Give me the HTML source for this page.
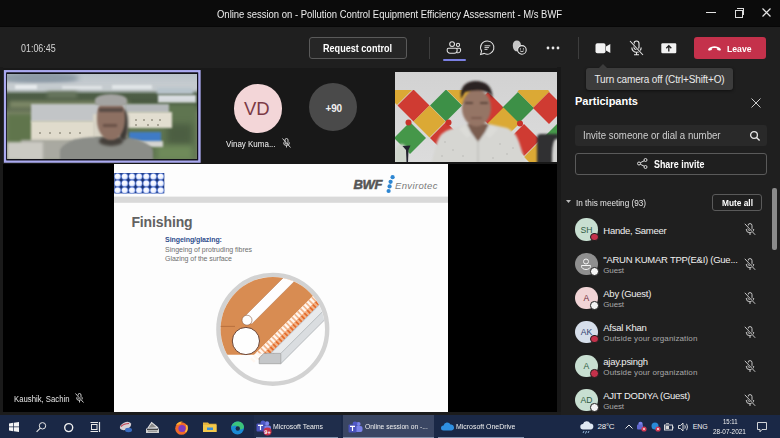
<!DOCTYPE html>
<html><head><meta charset="utf-8">
<style>
*{box-sizing:border-box;margin:0;padding:0}
html,body{width:780px;height:438px;overflow:hidden;background:#181818;font-family:"Liberation Sans",sans-serif;color:#fff}
.a{position:absolute}
.t{position:absolute;white-space:nowrap;line-height:1}
svg{position:absolute;overflow:visible}
</style></head><body>

<!-- title bar -->
<div class="a" style="left:0;top:0;width:780px;height:27px;background:#0b0b0b"></div>
<div class="t" style="left:217px;top:9px;font-size:10.5px;transform:scaleX(0.902);transform-origin:0 0;color:#ececec">Online session on - Pollution Control Equipment Efficiency Assessment - M/s BWF</div>
<div class="a" style="left:706px;top:12px;width:10px;height:1.2px;background:#e4e4e4"></div>
<div class="a" style="left:735px;top:10px;width:8px;height:8px;border:1px solid #ddd"></div>
<div class="a" style="left:737px;top:8px;width:7px;height:7px;border-top:1px solid #ddd;border-right:1px solid #ddd"></div>
<svg style="left:762px;top:8px" width="9" height="9"><path d="M0.5 0.5L8.5 8.5M8.5 0.5L0.5 8.5" stroke="#e4e4e4" stroke-width="1.2"/></svg>

<!-- toolbar -->
<div class="a" style="left:0;top:27px;width:780px;height:41px;background:#1f1f1f"></div>
<div class="a" style="left:0;top:26px;width:780px;height:1px;background:#070707"></div>
<div class="t" style="left:21px;top:44px;font-size:10px;transform:scaleX(0.891);transform-origin:0 0;color:#d6d6d6">01:06:45</div>
<div class="a" style="left:309px;top:37px;width:98px;height:22px;border:1px solid #5a5a5a;border-radius:3px;background:#262626"></div>
<div class="t" style="left:323px;top:44px;font-size:10px;font-weight:bold;transform:scaleX(0.907);transform-origin:0 0;color:#fff">Request control</div>
<div class="a" style="left:429px;top:37px;width:1px;height:22px;background:#3d3d3d"></div>
<!-- people icon -->
<svg style="left:446px;top:40px" width="17" height="15" viewBox="0 0 17 15">
<circle cx="6.1" cy="4.1" r="2.4" fill="none" stroke="#e4e4e4" stroke-width="1.05"/>
<circle cx="12" cy="4.9" r="1.6" fill="none" stroke="#e4e4e4" stroke-width="1.05"/>
<path d="M10.8 8.3h2.6a1.2 1.2 0 0 1 1.2 1.2v0.8a2.4 2.4 0 0 1-2.4 2.4h-1.2" fill="none" stroke="#e4e4e4" stroke-width="1.05"/>
<path d="M2.4 8.3h7.5a1.2 1.2 0 0 1 1.2 1.2v1a2.8 2.8 0 0 1-2.8 2.8h-4.3a2.8 2.8 0 0 1-2.8-2.8v-1a1.2 1.2 0 0 1 1.2-1.2z" fill="none" stroke="#e4e4e4" stroke-width="1.05"/>
</svg>
<div class="a" style="left:443px;top:59px;width:22.5px;height:2px;background:#7b80e2;border-radius:1px"></div>
<!-- chat icon -->
<svg style="left:479px;top:40px" width="16" height="16" viewBox="0 0 16 16">
<path d="M8.3 1a6.6 6.6 0 1 1-3.1 12.4l-3.6 1 1-3.3a6.6 6.6 0 0 1 5.7-10.1z" fill="none" stroke="#e4e4e4" stroke-width="1.05"/>
<path d="M5.5 5.8h5.8M5.5 7.6h4.5M5.5 9.4h3" stroke="#e4e4e4" stroke-width="0.9"/>
</svg>
<!-- reactions icon -->
<svg style="left:512px;top:40px" width="17" height="16" viewBox="0 0 17 16">
<path d="M0.8 5.2C0.8 2.5 2.6 0.6 4.9 0.6C7.2 0.6 8.9 2.4 8.9 4.8L8.9 6.3A5 5 0 0 0 5.6 11.2L3.6 11.2C1.8 10.2 0.8 8.2 0.8 5.2Z" fill="#c6c6c6"/>
<circle cx="9.9" cy="9.9" r="4.3" fill="#1f1f1f" stroke="#e4e4e4" stroke-width="1.1"/>
<circle cx="8.4" cy="8.9" r="0.6" fill="#e4e4e4"/><circle cx="11.4" cy="8.9" r="0.6" fill="#e4e4e4"/>
<path d="M8.1 10.9q1.8 1.6 3.6 0" fill="none" stroke="#e4e4e4" stroke-width="0.9"/>
</svg>
<!-- more -->
<svg style="left:546px;top:46px" width="14" height="4" viewBox="0 0 14 4">
<circle cx="2" cy="2" r="1.4" fill="#e8e8e8"/><circle cx="7" cy="2" r="1.4" fill="#e8e8e8"/><circle cx="12" cy="2" r="1.4" fill="#e8e8e8"/>
</svg>
<div class="a" style="left:578px;top:37px;width:1px;height:22px;background:#3d3d3d"></div>
<!-- camera -->
<svg style="left:595px;top:43px" width="16" height="11" viewBox="0 0 16 11">
<rect x="0.5" y="0.3" width="10" height="10" rx="1.8" fill="#f2f2f2"/>
<path d="M11 3.5L15.3 1v9L11 7.5z" fill="#f2f2f2"/>
</svg>
<!-- mic off -->
<svg style="left:629px;top:40px" width="15" height="16" viewBox="0 0 15 16">
<rect x="5" y="1" width="5" height="8.5" rx="2.5" fill="none" stroke="#e8e8e8" stroke-width="1.1"/>
<path d="M2.8 7.5a4.7 4.7 0 0 0 9.4 0M7.5 12.3v2.5M5 14.8h5" fill="none" stroke="#e8e8e8" stroke-width="1.1"/>
<path d="M1 1L14 15" stroke="#1f1f1f" stroke-width="2.2"/>
<path d="M1 1L14 15" stroke="#e8e8e8" stroke-width="1.1"/>
</svg>
<!-- share -->
<svg style="left:661px;top:43px" width="16" height="11" viewBox="0 0 16 11">
<rect x="0.3" y="0.3" width="15" height="10" rx="1.2" fill="#f2f2f2"/>
<path d="M7.8 8.5V2.8M5.3 5.2L7.8 2.6l2.5 2.6" fill="none" stroke="#1f1f1f" stroke-width="1.3"/>
</svg>
<!-- leave -->
<div class="a" style="left:694px;top:37px;width:72px;height:22px;border-radius:3px;background:#c4314b"></div>
<svg style="left:707px;top:45px" width="15" height="6" viewBox="0 0 15 6">
<path d="M1 4.2c3.5-3.8 9.5-3.8 13 0l-0.8 1.6-3-0.8v-1.6c-1.8-0.6-3.6-0.6-5.4 0v1.6l-3 0.8z" fill="#fff"/>
</svg>
<div class="t" style="left:727px;top:44px;font-size:9.5px;font-weight:bold;transform:scaleX(0.91);transform-origin:0 0;color:#fff">Leave</div>

<!-- stage -->
<div class="a" style="left:0;top:67px;width:3px;height:348px;background:#1a1a1a"></div>
<div class="a" style="left:3px;top:164px;width:554px;height:248px;background:#000"></div>
<div class="a" style="left:557px;top:67px;width:4px;height:348px;background:#181818"></div>
<div class="a" style="left:0;top:412px;width:561px;height:3px;background:#1c1c1c"></div>

<!-- tile 1 -->
<svg style="left:0;top:60px" width="210" height="110"><rect x="5.1" y="11.3" width="194.3" height="90.2" fill="none" stroke="#abaaf0" stroke-width="2.5"/><rect x="6.8" y="13" width="190.8" height="86.8" fill="none" stroke="#10101a" stroke-width="1"/></svg>
<div class="a" id="t1" style="left:7.3px;top:73.8px;width:189.7px;height:85.3px;overflow:hidden;background:#9aa6ad">
<div class="a" style="left:0;top:0;width:190px;height:86px;background:linear-gradient(#b9c2c9,#c3c9ce 10%,#bfc6cb 16%,#4e5e47 24%,#46563f 36%,#7a8466 46%)"></div>
<div class="a" style="left:-6px;top:-3px;width:78px;height:14px;border-radius:50%;background:#8d9aa5;filter:blur(2.5px)"></div>
<div class="a" style="left:0;top:9px;width:190px;height:8px;background:#c5cbcf;filter:blur(1.5px)"></div>
<div class="a" style="left:8px;top:11px;width:22px;height:4px;background:#e8ecee;filter:blur(1px)"></div>
<div class="a" style="left:55px;top:12px;width:40px;height:3px;background:#e0e4e6;filter:blur(1px)"></div>
<div class="a" style="left:105px;top:11px;width:40px;height:4px;background:#e2e6e8;filter:blur(1px)"></div>
<div class="a" style="left:150px;top:14px;width:36px;height:6px;background:#b8c4cc;filter:blur(1.5px)"></div>
<div class="a" style="left:2px;top:27px;width:120px;height:7px;background:#7f8a68;filter:blur(2px)"></div>
<div class="a" style="left:40px;top:18px;width:30px;height:6px;background:#6a7860;filter:blur(2px)"></div>
<div class="a" style="left:151px;top:21px;width:38px;height:8px;background:#d8dce0;filter:blur(1px)"></div>
<div class="a" style="left:0;top:40px;width:26px;height:32px;background:#60754c;filter:blur(2px)"></div>
<div class="a" style="left:120px;top:30px;width:70px;height:56px;background:#5f7550;filter:blur(2px)"></div>
<div class="a" style="left:160px;top:50px;width:25px;height:20px;background:#4c5e42;filter:blur(3px)"></div>
<div class="a" style="left:150px;top:72px;width:35px;height:14px;background:#6f8a5a;filter:blur(2.5px)"></div>
<div class="a" style="left:24px;top:30px;width:95px;height:18px;background:#c2c5c7;filter:blur(0.8px)"></div>
<div class="a" style="left:24px;top:47px;width:64px;height:21px;background:#e0dbcc;filter:blur(0.8px)"></div>
<div class="a" style="left:86px;top:40px;width:34px;height:24px;background:#d8d4c6;filter:blur(0.8px)"></div>
<div class="a" style="left:118px;top:30px;width:44px;height:9px;background:#b4b8ba;filter:blur(0.8px)"></div>
<div class="a" style="left:118px;top:38px;width:47px;height:16px;background:#e2ded0;filter:blur(0.8px)"></div>
<div class="a" style="left:32px;top:58px;width:2px;height:2px;background:#a9a596;filter:blur(0.6px)"></div><div class="a" style="left:42px;top:58px;width:2px;height:2px;background:#a9a596;filter:blur(0.6px)"></div><div class="a" style="left:52px;top:58px;width:2px;height:2px;background:#a9a596;filter:blur(0.6px)"></div><div class="a" style="left:62px;top:58px;width:2px;height:2px;background:#a9a596;filter:blur(0.6px)"></div><div class="a" style="left:72px;top:58px;width:2px;height:2px;background:#a9a596;filter:blur(0.6px)"></div><div class="a" style="left:128px;top:45px;width:2px;height:2px;background:#a9a596;filter:blur(0.6px)"></div><div class="a" style="left:136px;top:45px;width:2px;height:2px;background:#a9a596;filter:blur(0.6px)"></div><div class="a" style="left:144px;top:45px;width:2px;height:2px;background:#a9a596;filter:blur(0.6px)"></div><div class="a" style="left:152px;top:45px;width:2px;height:2px;background:#a9a596;filter:blur(0.6px)"></div><div class="a" style="left:128px;top:50px;width:2px;height:2px;background:#a9a596;filter:blur(0.6px)"></div><div class="a" style="left:140px;top:50px;width:2px;height:2px;background:#a9a596;filter:blur(0.6px)"></div><div class="a" style="left:150px;top:50px;width:2px;height:2px;background:#a9a596;filter:blur(0.6px)"></div>
<div class="a" style="left:122px;top:58px;width:32px;height:11px;background:#3f7bc6;filter:blur(1px)"></div>
<div class="a" style="left:126px;top:67px;width:30px;height:6px;background:#d4d4d0;filter:blur(1px)"></div>
<div class="a" style="left:14px;top:66px;width:80px;height:20px;background:#a9a9a1;filter:blur(1.5px)"></div>
<div class="a" style="left:0;top:68px;width:36px;height:18px;background:#cbcac3;filter:blur(1.5px)"></div>
<div class="a" style="left:53px;top:63px;width:93px;height:36px;border-radius:40% 40% 0 0;background:#8b8d88;filter:blur(1.2px)"></div>
<div class="a" style="left:92px;top:62px;width:24px;height:10px;border-radius:50%;background:#45403b;filter:blur(1.5px)"></div>
<div class="a" style="left:111px;top:36px;width:10px;height:30px;border-radius:40%;background:#3e3a36;filter:blur(1.5px)"></div>
<div class="a" style="left:90px;top:24px;width:28px;height:42px;border-radius:45% 45% 48% 48%;background:#8d7062;filter:blur(1.2px)"></div>
<div class="a" style="left:88px;top:20px;width:32px;height:12px;border-radius:50% 50% 25% 25%;background:#a4a4a2;filter:blur(1.2px)"></div>
<div class="a" style="left:92px;top:34px;width:24px;height:4px;background:#5a4c46;filter:blur(1.2px)"></div>
<div class="a" style="left:96px;top:50px;width:14px;height:3px;background:#6a5248;filter:blur(1px)"></div>
</div>

<!-- avatars -->
<div class="a" style="left:233.5px;top:84.3px;width:48.5px;height:48.5px;border-radius:50%;background:#f3d6d8"></div>
<div class="t" style="left:244px;top:100px;font-size:18.5px;letter-spacing:0px;color:#7b3a46">VD</div>
<div class="t" style="left:226px;top:139px;font-size:9.5px;transform:scaleX(0.84);transform-origin:0 0;color:#f6f6f6">Vinay Kuma...</div>
<svg style="left:282px;top:138px" width="9" height="10" viewBox="0 0 9 10">
<rect x="3" y="0.5" width="3" height="5.5" rx="1.5" fill="none" stroke="#ddd" stroke-width="0.9"/>
<path d="M1.5 4.5a3 3 0 0 0 6 0M4.5 7.5v2" fill="none" stroke="#ddd" stroke-width="0.9"/>
<path d="M0.5 0.5L8.5 9.5" stroke="#ddd" stroke-width="0.9"/>
</svg>
<div class="a" style="left:308.8px;top:83.2px;width:48px;height:48px;border-radius:50%;background:#4a4a4a"></div>
<div class="t" style="left:325.5px;top:103.5px;font-size:10px;font-weight:bold;letter-spacing:-0.2px;color:#f0f0f0">+90</div>

<!-- tile 3 -->
<div class="a" id="t3" style="left:395px;top:72px;width:162px;height:90px;overflow:hidden;background:#dcdcdc">
<div class="a" style="left:0;top:0;width:162px;height:90px;background:linear-gradient(#d2d2d2,#dcdcdc)"></div>
<svg style="left:0;top:0" width="162" height="90" viewBox="0 0 162 90">
<defs><clipPath id="wc"><rect x="0" y="18" width="162" height="72"/></clipPath><filter id="bl"><feGaussianBlur stdDeviation="0.6"/></filter></defs>
<g clip-path="url(#wc)" filter="url(#bl)">
<path d="M2 1 L18 17 L2 33 L-14 17 Z" fill="#dba934"/>
<path d="M18.5 17.5 L34.5 33.5 L18.5 49.5 L2.5 33.5 Z" fill="#cf3a32"/>
<path d="M51 17.5 L67 33.5 L51 49.5 L35 33.5 Z" fill="#3c9046"/>
<path d="M67 1 L83 17 L67 33 L51 17 Z" fill="#dba934"/>
<path d="M34.5 33.5 L50.5 49.5 L34.5 65.5 L18.5 49.5 Z" fill="#dba934"/>
<path d="M15 50 L31 66 L15 82 L-1 66 Z" fill="#44974a"/>
<path d="M51 50 L67 66 L51 82 L35 66 Z" fill="#cf3a32"/>
<path d="M93 20 L109 36 L93 52 L77 36 Z" fill="#cf3a32"/>
<path d="M123 20 L139 36 L123 52 L107 36 Z" fill="#3c9046"/>
<path d="M138.5 3.5 L154.5 19.5 L138.5 35.5 L122.5 19.5 Z" fill="#dba934"/>
<path d="M154 20 L170 36 L154 52 L138 36 Z" fill="#cf3a32"/>
<path d="M108.5 35.5 L124.5 51.5 L108.5 67.5 L92.5 51.5 Z" fill="#dba934"/>
<path d="M129 52 L145 68 L129 84 L113 68 Z" fill="#cf3a32"/>
<path d="M162 52 L178 68 L162 84 L146 68 Z" fill="#44974a"/>
<path d="M145 69 L161 85 L145 101 L129 85 Z" fill="#dba934"/>
<path d="M-18 50 L-2 66 L-18 82 L-34 66 Z" fill="#cf3a32"/>
<circle cx="13.5" cy="50.5" r="3" fill="#c8302c"/>
<circle cx="53.5" cy="50.5" r="3" fill="#c8302c"/>
<circle cx="125" cy="51.5" r="3" fill="#c8302c"/>
</g>
</svg>
<div class="a" style="left:0;top:72px;width:13px;height:20px;border-radius:60% 60% 0 0;background:#cfd6cc;filter:blur(0.8px)"></div>
<svg style="left:0;top:0" width="162" height="90" viewBox="0 0 162 90"><path d="M7.5 74 L15.5 73.5 L13.5 78 L13 90 L11.5 90 L11 78 Z" fill="#22222e" filter="url(#bl)"/></svg>
<div class="a" style="left:142px;top:62px;width:21px;height:30px;border-radius:4px 0 0 0;background:#303032;filter:blur(0.8px)"></div>
<div class="a" style="left:157px;top:67px;width:7px;height:25px;border-radius:60% 0 0 0;background:#d4d4d2;filter:blur(0.8px)"></div>
<svg style="left:0;top:0" width="162" height="90" viewBox="0 0 162 90"><defs><filter id="bl2"><feGaussianBlur stdDeviation="0.9"/></filter></defs>
<g filter="url(#bl2)">
<path d="M36 92 L42 70 Q45 60 56 57 L72 52 L94 52 L112 56 Q121 60 124 70 L131 92 Z" fill="#d6d6d2"/>
<path d="M72 52 L94 52 L90 60 L83 70 L76 60 Z" fill="#7a5d50"/>
<path d="M70 53 L76 63 L72 66 L64 57 Z M96 53 L90 63 L95 66 L103 57 Z" fill="#dcdcd8"/>
<path d="M83 68 V92" stroke="#b0b0ac" stroke-width="0.8"/>
<ellipse cx="81.5" cy="36" rx="14.5" ry="18.5" fill="#957565"/>
<path d="M66 27 Q64 10 80 9 Q98 9 97.5 27 L95 22 Q88 16 70 20 Z" fill="#2b2321"/>
<path d="M70 31 h8 M85 31 h8" stroke="#3e2c26" stroke-width="1.6"/>
<path d="M76 46 h11" stroke="#6a4c40" stroke-width="1.2"/>
</g>
<g fill="#9a9a96" opacity="0.6"><circle cx="50" cy="70" r="0.7"/><circle cx="58" cy="78" r="0.7"/><circle cx="105" cy="72" r="0.7"/><circle cx="112" cy="82" r="0.7"/><circle cx="68" cy="84" r="0.7"/><circle cx="98" cy="86" r="0.7"/><circle cx="47" cy="84" r="0.7"/><circle cx="118" cy="76" r="0.7"/></g>
</svg>
</div>

<!-- slide -->
<div class="a" id="slide" style="left:113.5px;top:164px;width:334px;height:248px;background:#fdfdfd;overflow:hidden">
<svg style="left:0;top:0" width="334" height="248" viewBox="0 0 334 248">
<defs>
<linearGradient id="dg" x1="0" y1="0" x2="0" y2="1"><stop offset="0" stop-color="#22418e"/><stop offset="0.5" stop-color="#142a66"/><stop offset="1" stop-color="#22418e"/></linearGradient>
<radialGradient id="dot" cx="0.45" cy="0.4" r="0.65"><stop offset="0" stop-color="#ffffff"/><stop offset="0.6" stop-color="#eef2ff"/><stop offset="1" stop-color="#b8c8f0"/></radialGradient>
<clipPath id="cc"><circle cx="158.8" cy="165.3" r="52.2"/></clipPath>
</defs>
<rect x="0.3" y="9" width="50" height="20.4" fill="url(#dg)"/>
<g fill="#6a8ae0" opacity="0.9"><circle cx="3.6" cy="12.5" r="3.55"/><circle cx="10.7" cy="12.5" r="3.55"/><circle cx="18" cy="12.5" r="3.55"/><circle cx="25.1" cy="12.5" r="3.55"/><circle cx="32.3" cy="12.5" r="3.55"/><circle cx="39.4" cy="12.5" r="3.55"/><circle cx="46.7" cy="12.5" r="3.55"/><circle cx="3.6" cy="19.4" r="3.55"/><circle cx="10.7" cy="19.4" r="3.55"/><circle cx="18" cy="19.4" r="3.55"/><circle cx="25.1" cy="19.4" r="3.55"/><circle cx="32.3" cy="19.4" r="3.55"/><circle cx="39.4" cy="19.4" r="3.55"/><circle cx="46.7" cy="19.4" r="3.55"/><circle cx="3.6" cy="26.3" r="3.55"/><circle cx="10.7" cy="26.3" r="3.55"/><circle cx="18" cy="26.3" r="3.55"/><circle cx="25.1" cy="26.3" r="3.55"/><circle cx="32.3" cy="26.3" r="3.55"/><circle cx="39.4" cy="26.3" r="3.55"/><circle cx="46.7" cy="26.3" r="3.55"/></g><g fill="url(#dot)"><circle cx="3.6" cy="12.5" r="2.85"/><circle cx="10.7" cy="12.5" r="2.85"/><circle cx="18" cy="12.5" r="2.85"/><circle cx="25.1" cy="12.5" r="2.85"/><circle cx="32.3" cy="12.5" r="2.85"/><circle cx="39.4" cy="12.5" r="2.85"/><circle cx="46.7" cy="12.5" r="2.85"/><circle cx="3.6" cy="19.4" r="2.85"/><circle cx="10.7" cy="19.4" r="2.85"/><circle cx="18" cy="19.4" r="2.85"/><circle cx="25.1" cy="19.4" r="2.85"/><circle cx="32.3" cy="19.4" r="2.85"/><circle cx="39.4" cy="19.4" r="2.85"/><circle cx="46.7" cy="19.4" r="2.85"/><circle cx="3.6" cy="26.3" r="2.85"/><circle cx="10.7" cy="26.3" r="2.85"/><circle cx="18" cy="26.3" r="2.85"/><circle cx="25.1" cy="26.3" r="2.85"/><circle cx="32.3" cy="26.3" r="2.85"/><circle cx="39.4" cy="26.3" r="2.85"/><circle cx="46.7" cy="26.3" r="2.85"/></g>
<rect x="0" y="32.6" width="334" height="6.2" fill="#d9d9d9"/>
<g fill="#2d86d2">
<circle cx="278.6" cy="13.2" r="2.1"/><circle cx="276.6" cy="17.8" r="2.1"/><circle cx="275.6" cy="22.4" r="2.1"/><circle cx="274.6" cy="27" r="2.1"/>
</g>
<!-- graphic -->
<circle cx="158.8" cy="165.3" r="54.4" fill="none" stroke="#d2d2d2" stroke-width="4.4"/>
<g clip-path="url(#cc)">
<path d="M95 190.7 L140.1 190.7 L240 90.8 L240 60 L95 60 Z" fill="#d88c52"/>
<path d="M128.5 154.5 L240 43 L240 57.8 L137.8 160 Z" fill="#fefefe" stroke="#b07550" stroke-width="0.5"/>
<path d="M100 162.4 L121 162.4" stroke="#b06838" stroke-width="0.8"/>
<path d="M141.4 189.4 L156.8 189.4 L240 106.2 L240 90.8 Z" fill="#f2b48a"/>
<path d="M138 196.8 L240 94.8" stroke="#fff7f0" stroke-width="5.4" stroke-dasharray="2.3 1.7"/>
<path d="M146 196.5 L240 102.5" stroke="#e46c2c" stroke-width="4.4" stroke-dasharray="1.8 2.2"/>
<path d="M153 196.2 L240 109.2" stroke="#ec9a6a" stroke-width="1"/>
<path d="M156.8 189.4 L166.8 189.4 L240 116.2 L240 106.2 Z" fill="#e8eaec"/>
<path d="M166.8 189.4 L166.8 199.7 L240 126.5 L240 116.2 Z" fill="#dadde0"/>
<path d="M156.8 189.4 L240 106.2" stroke="#a9b2be" stroke-width="0.7"/>
<path d="M166.8 189.4 L240 116.2 M166.8 199.7 L240 126.5" stroke="#a4a8ac" stroke-width="0.7"/>
<path d="M145.2 194 L149.8 189.4 L166.8 189.4 L166.8 199.7 L145.2 199.7 Z" fill="#c5c7c9" stroke="#9c9c9c" stroke-width="0.7"/>
</g>
<circle cx="133" cy="156.2" r="5" fill="#fefefe" stroke="#8a5a40" stroke-width="0.6"/>
<circle cx="131.9" cy="177" r="13.6" fill="#fefefe" stroke="#6b4434" stroke-width="1"/>
</svg>
<div class="t" style="left:240px;top:14.2px;font-size:13px;font-weight:bold;font-style:italic;letter-spacing:-0.3px;color:#555;-webkit-text-stroke:0.5px #555">BWF</div>
<div class="t" style="left:281.5px;top:17.3px;font-size:9.5px;font-style:italic;letter-spacing:0.35px;color:#7a7a7a">Envirotec</div>
<div class="t" style="left:17.9px;top:51.3px;font-size:14px;font-weight:bold;letter-spacing:-0.12px;color:#626262">Finishing</div>
<div class="t" style="left:51.6px;top:71.9px;font-size:7px;font-weight:bold;letter-spacing:-0.07px;color:#2f4e8d">Singeing/glazing:</div>
<div class="t" style="left:51.6px;top:81.5px;font-size:7px;letter-spacing:-0.02px;color:#6e6e6e">Singeing of protruding fibres</div>
<div class="t" style="left:51.6px;top:91.3px;font-size:7px;letter-spacing:-0.06px;color:#6e6e6e">Glazing of the surface</div>
</div>
<div class="t" style="left:14px;top:395px;font-size:8.5px;transform:scaleX(0.91);transform-origin:0 0;color:#e6e6e6">Kaushik, Sachin</div>
<svg style="left:75px;top:393px" width="9" height="10" viewBox="0 0 9 10">
<rect x="3" y="0.5" width="3" height="5.5" rx="1.5" fill="none" stroke="#ddd" stroke-width="0.9"/>
<path d="M1.5 4.5a3 3 0 0 0 6 0M4.5 7.5v2" fill="none" stroke="#ddd" stroke-width="0.9"/>
<path d="M0.5 0.5L8.5 9.5" stroke="#000" stroke-width="1.8"/><path d="M0.5 0.5L8.5 9.5" stroke="#ddd" stroke-width="0.9"/>
</svg>

<!-- participants panel -->
<div class="a" style="left:561px;top:67px;width:219px;height:348px;background:#1f1f1f"></div>
<div class="t" style="left:575px;top:96px;font-size:11px;font-weight:bold;letter-spacing:0px;color:#fff">Participants</div>
<svg style="left:750.5px;top:98px" width="10" height="10" viewBox="0 0 10 10"><path d="M0.5 0.5L9.5 9.5M9.5 0.5L0.5 9.5" stroke="#ccc" stroke-width="1"/></svg>
<div class="a" style="left:575px;top:124.5px;width:192px;height:21px;background:#292929;border-radius:3px"></div>
<div class="t" style="left:583px;top:130px;font-size:10.5px;transform:scaleX(0.917);transform-origin:0 0;color:#cfcfcf">Invite someone or dial a number</div>
<svg style="left:749px;top:129.5px" width="12" height="12" viewBox="0 0 12 12"><circle cx="5" cy="5" r="3.4" fill="none" stroke="#e6e6e6" stroke-width="1.3"/><path d="M7.5 7.5L10.6 10.6" stroke="#e6e6e6" stroke-width="1.4"/></svg>
<div class="a" style="left:575px;top:153px;width:192px;height:21.5px;border:1px solid #5a5a5a;border-radius:3px;background:#1f1f1f"></div>
<svg style="left:637px;top:158px" width="11" height="11" viewBox="0 0 11 11"><circle cx="8.5" cy="2" r="1.5" fill="none" stroke="#ddd" stroke-width="1"/><circle cx="2" cy="5.5" r="1.5" fill="none" stroke="#ddd" stroke-width="1"/><circle cx="8.5" cy="9" r="1.5" fill="none" stroke="#ddd" stroke-width="1"/><path d="M3.3 4.7L7.2 2.8M3.3 6.3L7.2 8.2" stroke="#ddd" stroke-width="1"/></svg>
<div class="t" style="left:654px;top:159.5px;font-size:10px;font-weight:bold;transform:scaleX(0.89);transform-origin:0 0;color:#fff">Share invite</div>
<svg style="left:566px;top:200px" width="5" height="4" viewBox="0 0 5 4"><path d="M0 0h5L2.5 3z" fill="#bbb"/></svg>
<div class="t" style="left:575.5px;top:198px;font-size:9.5px;transform:scaleX(0.861);transform-origin:0 0;color:#e6e6e6">In this meeting (93)</div>
<div class="a" style="left:712px;top:194px;width:50px;height:16.5px;border:1px solid #5a5a5a;border-radius:3px;background:#1f1f1f"></div>
<div class="t" style="left:721.5px;top:198px;font-size:9.5px;font-weight:bold;transform:scaleX(0.876);transform-origin:0 0;color:#fff">Mute all</div>
<div class="a" style="left:772px;top:188px;width:4.5px;height:62px;border-radius:2px;background:#8a8a8a"></div>
<div id="plist"></div>
<div class="a" style="left:575.2px;top:218.4px;width:22.4px;height:22.4px;border-radius:50%;background:#c8dfd1"></div>
<div class="t" style="left:575.2px;width:22.4px;text-align:center;top:225.7px;font-size:8.6px;letter-spacing:-0.1px;color:#2f5c43">SH</div>
<div class="a" style="left:590.1px;top:232.6px;width:8.6px;height:8.6px;border-radius:50%;background:#c4314b;border:1.3px solid #1f1f1f"></div>
<div class="t" style="left:603.3px;top:226.0px;font-size:9.5px;letter-spacing:-0.26px;color:#f0f0f0">Hande, Sameer</div>
<svg style="left:743.5px;top:223.4px" width="12" height="12.5" viewBox="0 0 12 12.5"><rect x="4" y="0.6" width="4" height="7" rx="2" fill="none" stroke="#d0d0d0" stroke-width="0.95"/><path d="M2.2 6a3.8 3.8 0 0 0 7.6 0M6 9.8v2.2" fill="none" stroke="#d0d0d0" stroke-width="0.95"/><path d="M0.8 0.8L11.2 11.8" stroke="#1f1f1f" stroke-width="2"/><path d="M0.8 0.8L11.2 11.8" stroke="#d0d0d0" stroke-width="0.95"/></svg>
<div class="a" style="left:575.2px;top:253.0px;width:22.4px;height:22.4px;border-radius:50%;background:#8f8f8f"></div>
<svg style="left:580.4px;top:258.2px" width="12" height="12" viewBox="0 0 12 12"><circle cx="6" cy="3.5" r="2.5" fill="none" stroke="#f4f4f4" stroke-width="1"/><path d="M1.5 7.5h9v0.8c0 1.8-2 3.2-4.5 3.2s-4.5-1.4-4.5-3.2z" fill="none" stroke="#f4f4f4" stroke-width="1"/></svg>
<div class="a" style="left:590.1px;top:267.2px;width:8.6px;height:8.6px;border-radius:50%;background:#f4f4f4;border:1.3px solid #1f1f1f"></div>
<div class="t" style="left:603.3px;top:255.2px;font-size:9.5px;letter-spacing:-0.26px;color:#f0f0f0">"ARUN KUMAR TPP(E&amp;I) (Gue...</div>
<div class="t" style="left:603.3px;top:267.0px;font-size:8px;letter-spacing:-0.15px;color:#a8a8a8">Guest</div>
<svg style="left:743.5px;top:258.0px" width="12" height="12.5" viewBox="0 0 12 12.5"><rect x="4" y="0.6" width="4" height="7" rx="2" fill="none" stroke="#d0d0d0" stroke-width="0.95"/><path d="M2.2 6a3.8 3.8 0 0 0 7.6 0M6 9.8v2.2" fill="none" stroke="#d0d0d0" stroke-width="0.95"/><path d="M0.8 0.8L11.2 11.8" stroke="#1f1f1f" stroke-width="2"/><path d="M0.8 0.8L11.2 11.8" stroke="#d0d0d0" stroke-width="0.95"/></svg>
<div class="a" style="left:575.2px;top:286.8px;width:22.4px;height:22.4px;border-radius:50%;background:#f1d4d6"></div>
<div class="t" style="left:575.2px;width:22.4px;text-align:center;top:294.1px;font-size:8.6px;letter-spacing:-0.1px;color:#6e2c3a">A</div>
<div class="a" style="left:590.1px;top:301.0px;width:8.6px;height:8.6px;border-radius:50%;background:#f4f4f4;border:1.3px solid #1f1f1f"></div>
<div class="t" style="left:603.3px;top:289.0px;font-size:9.5px;letter-spacing:-0.26px;color:#f0f0f0">Aby (Guest)</div>
<div class="t" style="left:603.3px;top:300.8px;font-size:8px;letter-spacing:-0.15px;color:#a8a8a8">Guest</div>
<svg style="left:743.5px;top:291.8px" width="12" height="12.5" viewBox="0 0 12 12.5"><rect x="4" y="0.6" width="4" height="7" rx="2" fill="none" stroke="#d0d0d0" stroke-width="0.95"/><path d="M2.2 6a3.8 3.8 0 0 0 7.6 0M6 9.8v2.2" fill="none" stroke="#d0d0d0" stroke-width="0.95"/><path d="M0.8 0.8L11.2 11.8" stroke="#1f1f1f" stroke-width="2"/><path d="M0.8 0.8L11.2 11.8" stroke="#d0d0d0" stroke-width="0.95"/></svg>
<div class="a" style="left:575.2px;top:320.7px;width:22.4px;height:22.4px;border-radius:50%;background:#d6deea"></div>
<div class="t" style="left:575.2px;width:22.4px;text-align:center;top:328.0px;font-size:8.6px;letter-spacing:-0.1px;color:#30406e">AK</div>
<div class="a" style="left:590.1px;top:334.9px;width:8.6px;height:8.6px;border-radius:50%;background:#c4314b;border:1.3px solid #1f1f1f"></div>
<div class="t" style="left:603.3px;top:322.9px;font-size:9.5px;letter-spacing:-0.26px;color:#f0f0f0">Afsal Khan</div>
<div class="t" style="left:603.3px;top:334.7px;font-size:8px;letter-spacing:0.12px;color:#a8a8a8">Outside your organization</div>
<svg style="left:743.5px;top:325.7px" width="12" height="12.5" viewBox="0 0 12 12.5"><rect x="4" y="0.6" width="4" height="7" rx="2" fill="none" stroke="#d0d0d0" stroke-width="0.95"/><path d="M2.2 6a3.8 3.8 0 0 0 7.6 0M6 9.8v2.2" fill="none" stroke="#d0d0d0" stroke-width="0.95"/><path d="M0.8 0.8L11.2 11.8" stroke="#1f1f1f" stroke-width="2"/><path d="M0.8 0.8L11.2 11.8" stroke="#d0d0d0" stroke-width="0.95"/></svg>
<div class="a" style="left:575.2px;top:355.0px;width:22.4px;height:22.4px;border-radius:50%;background:#c8dfd1"></div>
<div class="t" style="left:575.2px;width:22.4px;text-align:center;top:362.3px;font-size:8.6px;letter-spacing:-0.1px;color:#2f5c43">A</div>
<div class="a" style="left:590.1px;top:369.2px;width:8.6px;height:8.6px;border-radius:50%;background:#c4314b;border:1.3px solid #1f1f1f"></div>
<div class="t" style="left:603.3px;top:357.2px;font-size:9.5px;letter-spacing:-0.26px;color:#f0f0f0">ajay.psingh</div>
<div class="t" style="left:603.3px;top:369.0px;font-size:8px;letter-spacing:0.12px;color:#a8a8a8">Outside your organization</div>
<svg style="left:743.5px;top:360.0px" width="12" height="12.5" viewBox="0 0 12 12.5"><rect x="4" y="0.6" width="4" height="7" rx="2" fill="none" stroke="#d0d0d0" stroke-width="0.95"/><path d="M2.2 6a3.8 3.8 0 0 0 7.6 0M6 9.8v2.2" fill="none" stroke="#d0d0d0" stroke-width="0.95"/><path d="M0.8 0.8L11.2 11.8" stroke="#1f1f1f" stroke-width="2"/><path d="M0.8 0.8L11.2 11.8" stroke="#d0d0d0" stroke-width="0.95"/></svg>
<div class="a" style="left:575.2px;top:389.0px;width:22.4px;height:22.4px;border-radius:50%;background:#c8dfd1"></div>
<div class="t" style="left:575.2px;width:22.4px;text-align:center;top:396.3px;font-size:8.6px;letter-spacing:-0.1px;color:#2f5c43">AD</div>
<div class="a" style="left:590.1px;top:403.2px;width:8.6px;height:8.6px;border-radius:50%;background:#f4f4f4;border:1.3px solid #1f1f1f"></div>
<div class="t" style="left:603.3px;top:391.2px;font-size:9.5px;letter-spacing:-0.26px;color:#f0f0f0">AJIT DODIYA (Guest)</div>
<div class="t" style="left:603.3px;top:403.0px;font-size:8px;letter-spacing:-0.15px;color:#a8a8a8">Guest</div>
<svg style="left:743.5px;top:394.0px" width="12" height="12.5" viewBox="0 0 12 12.5"><rect x="4" y="0.6" width="4" height="7" rx="2" fill="none" stroke="#d0d0d0" stroke-width="0.95"/><path d="M2.2 6a3.8 3.8 0 0 0 7.6 0M6 9.8v2.2" fill="none" stroke="#d0d0d0" stroke-width="0.95"/><path d="M0.8 0.8L11.2 11.8" stroke="#1f1f1f" stroke-width="2"/><path d="M0.8 0.8L11.2 11.8" stroke="#d0d0d0" stroke-width="0.95"/></svg>


<!-- tooltip -->
<div class="a" style="left:586px;top:68px;width:146.5px;height:22px;background:#3c3c3c;border-radius:3px;box-shadow:0 1px 3px rgba(0,0,0,0.5)"></div>
<svg style="left:598px;top:63.5px" width="10" height="5" viewBox="0 0 10 5"><path d="M0 5L5 0L10 5Z" fill="#3c3c3c"/></svg>
<div class="t" style="left:594.5px;top:75px;font-size:10px;letter-spacing:-0.15px;color:#ebebeb">Turn camera off (Ctrl+Shift+O)</div>

<!-- taskbar -->
<div class="a" id="tb" style="left:0;top:415px;width:780px;height:23px;background:#1a2846"></div>
<!-- windows logo -->
<svg style="left:8.5px;top:422px" width="10" height="10" viewBox="0 0 10 10">
<path d="M0 1.4L4.2 0.8V4.6H0Z M4.9 0.7L10 0V4.6H4.9Z M0 5.3H4.2V9.2L0 8.6Z M4.9 5.3H10V10L4.9 9.3Z" fill="#f4f4f4"/>
</svg>
<!-- search -->
<svg style="left:36px;top:422px" width="11" height="11" viewBox="0 0 11 11">
<circle cx="6.5" cy="3.8" r="3.2" fill="none" stroke="#e8e8e8" stroke-width="1"/>
<path d="M4.3 6.2L0.6 9.8" stroke="#e8e8e8" stroke-width="1.1"/>
</svg>
<!-- cortana -->
<svg style="left:63px;top:421.5px" width="12" height="12" viewBox="0 0 12 12">
<circle cx="5.7" cy="5.6" r="4" fill="none" stroke="#f0f0f0" stroke-width="1.4"/>
</svg>
<!-- task view -->
<svg style="left:90px;top:422px" width="11" height="10" viewBox="0 0 11 10">
<path d="M0.5 0.5h7.5M0.5 9.5h7.5" stroke="#e8e8e8" stroke-width="1"/>
<rect x="1.5" y="2.5" width="5.5" height="5" fill="none" stroke="#e8e8e8" stroke-width="1"/>
<path d="M9.5 0v10" stroke="#e8e8e8" stroke-width="1.2"/>
</svg>
<!-- app1 -->
<svg style="left:119px;top:421px" width="14" height="12" viewBox="0 0 14 12">
<ellipse cx="6.5" cy="5" rx="6" ry="3.6" transform="rotate(-25 6.5 5)" fill="#d8d0d4"/>
<path d="M2 5.5q3-3 8-3" stroke="#c04050" stroke-width="1.2" fill="none"/>
<ellipse cx="9.5" cy="9" rx="3.5" ry="2.2" fill="#3a6cc0"/>
</svg>
<!-- scanner -->
<svg style="left:145px;top:420.5px" width="15" height="13" viewBox="0 0 15 13">
<path d="M2 7.5L6.5 0.8L13.5 6.5L12 7.5Z" fill="#e6e6e6"/>
<path d="M3.5 6.8L6.8 2.2L11.5 6.2Z" fill="#8a8a8a"/>
<path d="M1 7.5h13v4.5H1z" fill="#d0d0d0"/>
<path d="M2 8.6h11" stroke="#3a3a3a" stroke-width="1"/>
<path d="M3 10.3h3M6 10.3h3M9 10.3h3" stroke-width="0.9" stroke="#888"/>
</svg>
<!-- firefox -->
<svg style="left:173.5px;top:420.5px" width="15" height="14" viewBox="0 0 15 14">
<circle cx="7.5" cy="7.5" r="6.3" fill="#f06a2a"/>
<path d="M2 4q2-4 7-3.5q-3 1-2 2.5" fill="#ffb030"/>
<circle cx="8" cy="7.5" r="3.6" fill="#7f3cc0"/>
<path d="M12.5 4q1.5 4-1 7" stroke="#ffc040" stroke-width="1.5" fill="none"/>
</svg>
<!-- folder -->
<svg style="left:202.5px;top:422px" width="14" height="10" viewBox="0 0 14 10">
<path d="M0 0.5h5l1.2 1.2H13.5V10H0Z" fill="#e6b43c"/>
<path d="M0 3h13.5V10H0Z" fill="#f2c94c"/>
<rect x="4" y="5.5" width="6" height="2.5" fill="#3c8fd8"/>
</svg>
<!-- edge -->
<svg style="left:229.5px;top:420.5px" width="15" height="14" viewBox="0 0 15 14">
<circle cx="7.5" cy="7" r="6.5" fill="#1a8ad4"/>
<path d="M1.5 6q1-5.5 7-5.5q5 0.5 5.5 5.5q-0.5 2.5-3.5 2.5q-2.5 0-3-2q0-2-2.5-2q-2.5 0-3.5 1.5z" fill="#3cc37a"/>
<circle cx="7.8" cy="7.5" r="2.2" fill="#1a2846"/>
</svg>
<!-- teams tile 1 -->
<div class="a" style="left:253.5px;top:415px;width:87px;height:23px;background:#1f2d4b"></div>
<div class="a" style="left:256px;top:436.5px;width:82px;height:1.5px;background:#8594ae"></div>
<svg style="left:256px;top:420px" width="16" height="16" viewBox="0 0 16 16">
<circle cx="11" cy="3.5" r="2.2" fill="#7b83eb"/>
<rect x="7" y="5.5" width="8" height="6" rx="2" fill="#7b83eb"/>
<circle cx="7" cy="3" r="2.5" fill="#5059c9"/>
<rect x="0.5" y="3.5" width="8" height="8" rx="1" fill="#4b53bc"/>
<path d="M2 5.3h5M4.5 5.3v4.8" stroke="#fff" stroke-width="1.2"/>
<circle cx="11.5" cy="11.5" r="4" fill="#c4314b"/>
<text x="11.5" y="13.6" font-size="5.5" font-family="Liberation Sans" font-weight="bold" fill="#fff" text-anchor="middle">9+</text>
</svg>
<div class="t" style="left:273px;top:423px;font-size:8px;transform:scaleX(0.86);transform-origin:0 0;color:#f0f0f0">Microsoft Teams</div>
<!-- teams tile 2 -->
<div class="a" style="left:342.5px;top:415px;width:91.5px;height:23px;background:#3a4663"></div>
<div class="a" style="left:342.5px;top:436.5px;width:91.5px;height:1.5px;background:#8594ae"></div>
<svg style="left:348px;top:420.5px" width="15" height="13" viewBox="0 0 15 13">
<circle cx="10.5" cy="3" r="2.1" fill="#7b83eb"/>
<rect x="6.5" y="5" width="8" height="6" rx="2" fill="#7b83eb"/>
<circle cx="7" cy="2.8" r="2.4" fill="#5059c9"/>
<rect x="0.5" y="3.5" width="8" height="8" rx="1" fill="#4b53bc"/>
<path d="M2 5.3h5M4.5 5.3v4.8" stroke="#fff" stroke-width="1.2"/>
</svg>
<div class="t" style="left:364.5px;top:423px;font-size:8px;transform:scaleX(0.835);transform-origin:0 0;color:#f0f0f0">Online session on -...</div>
<!-- onedrive -->
<div class="a" style="left:437.5px;top:436.5px;width:86.5px;height:1.5px;background:#8594ae"></div>
<svg style="left:441px;top:422px" width="13" height="9" viewBox="0 0 13 9">
<path d="M2.5 8.5a2.5 2.5 0 0 1 0-5a3.8 3.8 0 0 1 7-1a2.8 2.8 0 0 1 1 6z" fill="#2f8fe0"/>
</svg>
<div class="t" style="left:456.3px;top:423px;font-size:8px;transform:scaleX(0.867);transform-origin:0 0;color:#f0f0f0">Microsoft OneDrive</div>
<!-- weather -->
<svg style="left:579.5px;top:420.5px" width="13" height="13" viewBox="0 0 13 13">
<path d="M3 8.5a2.7 2.7 0 0 1 0-5.4a3.8 3.8 0 0 1 7.2-0.6a2.9 2.9 0 0 1 0.3 6z" fill="#dfe8f2"/>
<path d="M4 10l-1 2M6.5 10l-1 2.5M9 10l-1 2" stroke="#a8c8ec" stroke-width="0.9"/>
</svg>
<div class="t" style="left:597.5px;top:423px;font-size:8px;letter-spacing:-0.25px;color:#f0f0f0">28°C</div>
<!-- tray -->
<svg style="left:624.5px;top:424px" width="8" height="5" viewBox="0 0 8 5"><path d="M0.5 4.5L4 1L7.5 4.5" fill="none" stroke="#e8e8e8" stroke-width="1"/></svg>
<svg style="left:637px;top:421px" width="10" height="11" viewBox="0 0 10 11">
<circle cx="3.5" cy="3" r="2.2" fill="#7b83eb"/><rect x="0" y="3.5" width="6" height="5" rx="1" fill="#6068d0"/><circle cx="7" cy="8" r="2.6" fill="#d23b55"/><path d="M6 7l2 2M8 7l-2 2" stroke="#fff" stroke-width="0.6"/>
</svg>
<svg style="left:651px;top:421px" width="10" height="11" viewBox="0 0 10 11">
<circle cx="4" cy="5" r="3.5" fill="#2a8ad8"/><circle cx="7" cy="8" r="2.6" fill="#d23b55"/><path d="M6 7l2 2M8 7l-2 2" stroke="#fff" stroke-width="0.7"/>
</svg>
<svg style="left:664px;top:423px" width="10" height="8" viewBox="0 0 10 8">
<rect x="0.5" y="2" width="8" height="5" fill="none" stroke="#e8e8e8" stroke-width="0.9"/><rect x="1.5" y="3" width="3.5" height="3" fill="#d8d8d8"/><path d="M9 3.5v2" stroke="#e8e8e8" stroke-width="1"/><path d="M2 0.5h3" stroke="#ccc" stroke-width="0.8"/>
</svg>
<svg style="left:677.5px;top:422px" width="11" height="10" viewBox="0 0 11 10">
<path d="M0.5 3.5h2l2.5-2.5v8l-2.5-2.5h-2z" fill="none" stroke="#e8e8e8" stroke-width="0.9"/>
<path d="M6.8 3.3q1 1.7 0 3.4M8.6 1.8q1.8 3.2 0 6.4" fill="none" stroke="#e8e8e8" stroke-width="0.9"/>
</svg>
<div class="t" style="left:692.8px;top:423px;font-size:7px;letter-spacing:-0.1px;color:#f0f0f0">ENG</div>
<div class="t" style="left:722.5px;top:417.8px;font-size:7px;transform:scaleX(0.86);transform-origin:0 0;color:#f0f0f0">15:11</div>
<div class="t" style="left:713.3px;top:428.3px;font-size:7px;transform:scaleX(0.92);transform-origin:0 0;color:#f0f0f0">28-07-2021</div>
<svg style="left:757px;top:422px" width="10" height="11" viewBox="0 0 10 11">
<path d="M0.5 0.5h9v7h-4.5l-2 2.3v-2.3h-2.5z" fill="none" stroke="#e8e8e8" stroke-width="0.9"/>
</svg>


</body></html>
